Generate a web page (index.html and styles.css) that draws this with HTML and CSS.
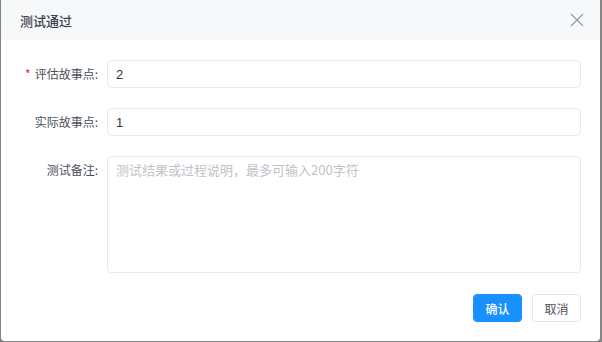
FILE: index.html
```html
<!DOCTYPE html>
<html lang="zh-CN">
<head>
    <meta charset="UTF-8">
    <meta name="viewport" content="width=device-width, initial-scale=1.0">
    <title>测试通过</title>
    <link rel="stylesheet" href="styles.css">
</head>
<body>
    <div class="dialog">
        <div class="dialog-header">
            <span class="dialog-title">测试通过</span>
            <span class="dialog-close">
                <svg width="14" height="14" viewBox="0 0 14 14">
                    <path d="M1 1 L13 13 M13 1 L1 13" stroke="#9a9ea6" stroke-width="1.3" fill="none"/>
                </svg>
            </span>
        </div>

        <div class="dialog-body">
            <div class="form-row">
                <label class="form-label"><span class="required">*</span>评估故事点:</label>
                <input class="form-input" type="text" value="2">
            </div>
            <div class="form-row">
                <label class="form-label">实际故事点:</label>
                <input class="form-input" type="text" value="1">
            </div>
            <div class="form-row">
                <label class="form-label">测试备注:</label>
                <textarea class="form-textarea" placeholder="测试结果或过程说明，最多可输入200字符"></textarea>
            </div>
        </div>

        <div class="dialog-footer">
            <button class="btn btn-primary">确认</button>
            <button class="btn">取消</button>
        </div>
    </div>
</body>
</html>
```

FILE: styles.css
```css
body {
    margin: 0;
    background-color: #858585;
    font-family: "Noto Sans CJK SC", "Noto Sans", sans-serif;
    font-size: 12px;
    color: #333;
}

.dialog {
    width: 599px;
    height: 341px;
    margin-left: 1px;
    background: #fff;
    border-radius: 0 0 4px 4px;
    display: flex;
    flex-direction: column;
}

.dialog-header {
    height: 40px;
    background: #f7f8fa;
    padding: 0 16px 0 19px;
    display: flex;
    align-items: center;
    justify-content: space-between;
}

.dialog-title {
    font-size: 13px;
    font-weight: 500;
    color: #3d4350;
}

.dialog-close {
    display: flex;
    cursor: pointer;
}

.dialog-body {
    padding: 20px 19px 0 0;
    display: flex;
    flex-direction: column;
    gap: 20px;
}

.form-row {
    display: grid;
    grid-template-columns: 106px 1fr;
}

.form-label {
    text-align: right;
    padding-right: 9px;
    line-height: 28px;
    color: #4b505a;
}

.required {
    color: #f5222d;
    margin-right: 4px;
}

.form-input,
.form-textarea {
    box-sizing: border-box;
    border: 1px solid #e9eaec;
    border-radius: 4px;
    font-family: "Liberation Sans", "Noto Sans CJK SC", sans-serif;
    font-size: 13px;
    color: #333;
    padding: 0 8px;
    outline: none;
}

.form-input {
    height: 28px;
}

.form-textarea {
    height: 117px;
    resize: none;
    padding: 4px 8px;
    font-family: "Noto Sans CJK SC", sans-serif;
    line-height: 18px;
}

.form-textarea::placeholder {
    color: #bfc2c7;
}

.dialog-footer {
    margin-top: 21px;
    padding-right: 19px;
    display: flex;
    justify-content: flex-end;
    gap: 10px;
}

.btn {
    height: 28px;
    width: 49px;
    border: 1px solid #e5e6e8;
    border-radius: 4px;
    background: #fff;
    font-family: inherit;
    font-size: 12px;
    color: #4b505a;
    padding: 0;
    cursor: pointer;
}

.btn-primary {
    background: #1890ff;
    border-color: #1890ff;
    color: #fff;
    font-weight: 500;
}
```
